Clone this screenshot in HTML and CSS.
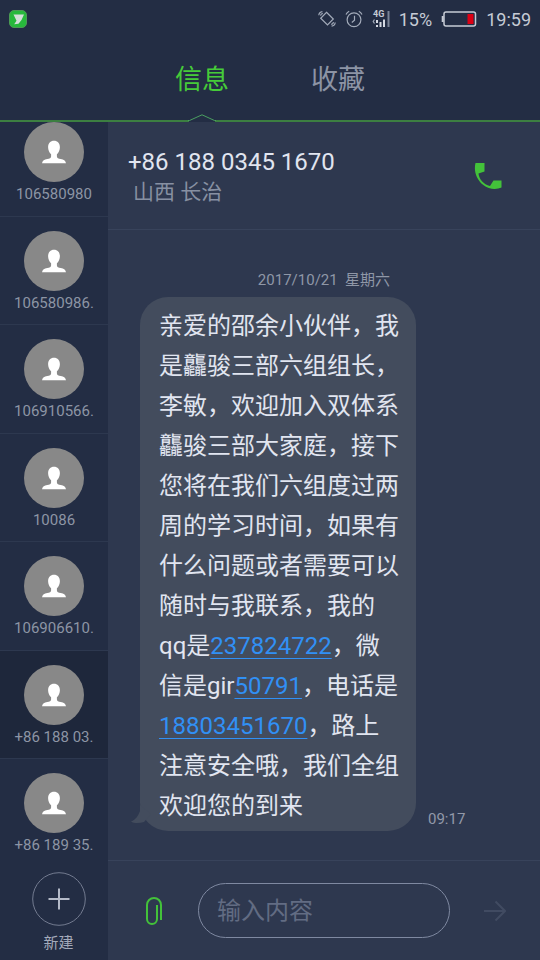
FILE: index.html
```html
<!DOCTYPE html>
<html lang="zh-CN">
<head>
<meta charset="utf-8">
<meta name="viewport" content="width=device-width, initial-scale=1">
<title>信息</title>
<link rel="stylesheet" href="styles.css">
</head>
<body>
<svg class="defs" aria-hidden="true">
  <symbol id="person" viewBox="0 0 24 24">
    <path d="M12 .8c3.600 0 5.900 2.600 5.900 6.400 0 2.900-1.300 5.600-3 7.100v2.100c0 1.500 1.500 2.100 3.900 2.600 2.900.6 4.700 1.500 5.200 4.200H0c.5-2.700 2.300-3.600 5.200-4.200 2.400-.5 3.900-1.100 3.900-2.600v-2.100c-1.700-1.500-3-4.200-3-7.100C6.100 3.400 8.400.8 12 .8z"/>
  </symbol>
</svg>
<div class="app">
  <header class="top">
    <div class="status">
      <svg class="app-icon" viewBox="0 0 18 18" aria-hidden="true">
        <rect x=".5" y=".5" width="17" height="17" rx="4.500" fill="#27b83c" stroke="#4c9a55"/>
        <path d="M4.500 4.500H15l-2.500 5.500-3 3.800-4.300.4 2.300-3.400z" fill="#d3ded9"/>
      </svg>
      <div class="status-icons">
        <svg class="icon-mute" viewBox="0 0 18 18" aria-hidden="true">
          <path d="M8.500 2.300 15.300 9 9.500 15 2.700 8.300z"/>
          <path d="M.8 5.200C1 3.200 2.400 1.800 4.400 1.600M2.500 5.600C2.700 4.300 3.500 3.500 4.800 3.300M17.200 12.500c-.2 2-1.600 3.400-3.600 3.600M15.500 12.100c-.2 1.300-1 2.100-2.300 2.300"/>
        </svg>
        <svg class="icon-alarm" viewBox="0 0 18 18" aria-hidden="true">
          <circle cx="9" cy="9.700" r="6.900"/>
          <path d="M9.500 5.700v4.600l-2.700 2.200M1 4.400C1.700 3 2.800 2 4.200 1.300M13.800 1.300C15.200 2 16.300 3 17 4.400"/>
        </svg>
        <svg class="icon-signal" viewBox="0 0 18 18" aria-hidden="true">
          <text x="1" y="7">4G</text>
          <path class="bars" d="M5 10v3M5 15v2M8.500 12v5M12 9.500V17"/>
          <path class="arrows" d="M2.500 9.500 1.200 11.500l1.300 2"/>
          <path class="faint" d="M16.500 1v16"/>
        </svg>
      </div>
      <span>15%</span>
      <svg class="icon-battery" viewBox="0 0 36 16" aria-hidden="true">
        <rect x="3" y="1" width="31.500" height="14" rx="2" fill="none" stroke="#c6cbd5" stroke-width="1.500"/>
        <path d="M1.700 5v6" stroke="#c6cbd5" stroke-width="2"/>
        <rect x="26.500" y="3" width="6" height="10" fill="#dc0014"/>
      </svg>
      <span>19:59</span>
    </div>
    <nav class="tabs">
      <a class="tab active" href="#messages" aria-current="page">信息</a>
      <a class="tab" href="#favorites">收藏</a>
    </nav>
    <svg class="notch" viewBox="0 0 28 8" aria-hidden="true"><path class="fill" d="M1 6.500 14 .8l13 5.700V8H1z"/><path class="line" d="M0 6.500h1.500L14 .8l12.500 5.700H28"/></svg>
  </header>
  <div class="body">
    <aside class="side">
      <ul class="people">
        <li class="person"><span class="avatar"><svg><use href="#person"/></svg></span><span>106580980</span></li>
        <li class="person"><span class="avatar"><svg><use href="#person"/></svg></span><span>106580986.</span></li>
        <li class="person"><span class="avatar"><svg><use href="#person"/></svg></span><span>106910566.</span></li>
        <li class="person"><span class="avatar"><svg><use href="#person"/></svg></span><span>10086</span></li>
        <li class="person"><span class="avatar"><svg><use href="#person"/></svg></span><span>106906610.</span></li>
        <li class="person selected"><span class="avatar"><svg><use href="#person"/></svg></span><span>+86 188 03.</span></li>
        <li class="person"><span class="avatar"><svg><use href="#person"/></svg></span><span>+86 189 35.</span></li>
      </ul>
      <button class="new" type="button">
        <svg viewBox="0 0 54 54" aria-hidden="true"><circle cx="27" cy="27" r="26.300"/><path d="M16.500 27h21M27 16.500v21"/></svg>
        <span>新建</span>
      </button>
    </aside>
    <main class="chat">
      <div class="contact">
        <div>
          <h1>+86 188 0345 1670</h1>
          <p>山西 长治</p>
        </div>
        <button class="call" type="button" aria-label="拨打电话">
          <svg viewBox="0 0 28 28" aria-hidden="true"><path d="M1.500 1H10.500V9.500L4.500 11.500C5 17 9.500 22.500 16 24L19.500 18.500H27.500V25.500C23 27.500 15.500 28 9 22.800C2.500 17.500-.5 9 1.500 1z"/></svg>
        </button>
      </div>
      <section class="thread">
        <p class="date">2017/10/21&nbsp; 星期六</p>
        <div class="message">
          <div class="bubble">
            <svg class="tail" viewBox="0 0 20 20" aria-hidden="true"><path d="M9 0v6C7 11 5 14.500 0 16.500c3 2 8 2 13 .5L20 9z"/></svg>
            亲爱的邵余小伙伴，我是龘骏三部六组组长，李敏，欢迎加入双体系龘骏三部大家庭，接下您将在我们六组度过两周的学习时间，如果有什么问题或者需要可以随时与我联系，我的<br>qq是<a href="tel:237824722">237824722</a>，微<br>信是gir<a href="tel:50791">50791</a>，电话是<a href="tel:18803451670">18803451670</a>，路上<br>注意安全哦，我们全组欢迎您的到来
          </div>
          <time>09:17</time>
        </div>
      </section>
      <form class="compose">
        <button class="attach" type="button" aria-label="添加附件">
          <svg viewBox="0 0 16 28" aria-hidden="true"><path d="M15 23V8a7 7 0 0 0-14 0v14a5 5 0 0 0 10 0V8"/></svg>
        </button>
        <input type="text" placeholder="输入内容" aria-label="输入内容">
        <button class="send" type="button" aria-label="发送">
          <svg viewBox="0 0 22 22" aria-hidden="true"><path d="M0 11h21M11.500 1.500 21 11l-9.500 9.500"/></svg>
        </button>
      </form>
    </main>
  </div>
</div>
</body>
</html>
```
FILE: styles.css
```css
* { box-sizing: border-box; }
body, h1, p, ul { margin: 0; padding: 0; }
body {
  background: #232d44;
  color: #e1e5f0;
  font-family: Roboto, "Noto Sans CJK SC", sans-serif;
}
button { border: 0; padding: 0; background: none; font: inherit; color: inherit; }
svg { display: block; }
.defs { position: absolute; width: 0; height: 0; }
.app { display: flex; flex-direction: column; min-height: 100vh; }

.top { position: relative; height: 122px; border-bottom: 2px solid #3c7f41; }
.status {
  display: flex;
  align-items: center;
  gap: 9px;
  height: 38px;
  padding: 0 9px;
  font-size: 18px;
  color: #c6cbd5;
}
.app-icon { width: 18px; height: 18px; margin-right: auto; }
.status-icons { display: flex; gap: 9px; }
.status-icons svg { width: 18px; height: 18px; fill: none; stroke: #a3abba; stroke-width: 1.2; }
.icon-signal text { font-size: 9px; font-weight: 700; fill: #c6cbd5; stroke: none; }
.icon-signal .bars { stroke: #d5d9e2; stroke-width: 2; }
.icon-signal .faint { stroke: #7b8497; stroke-width: 2; }
.icon-battery { width: 36px; height: 16px; }

.tabs { display: flex; justify-content: center; gap: 82px; }
.tab {
  line-height: 84px;
  font-size: 27px;
  color: #8c94a5;
  text-decoration: none;
}
.tab.active { color: #46cb39; }
.notch { position: absolute; left: 188px; bottom: -2px; width: 28px; height: 8px; }
.notch .fill { fill: #232d44; }
.notch .line { fill: none; stroke: #4b9f61; stroke-width: 1; }

.body { flex: 1; display: flex; }
.side {
  flex: none;
  display: flex;
  flex-direction: column;
  width: 108px;
  overflow: hidden;
  background: #232d44;
}
.people { flex: 1; display: flex; flex-direction: column; margin-top: -14px; list-style: none; }
.person {
  flex: 1;
  display: flex;
  flex-direction: column;
  align-items: center;
  padding-top: 14px;
  border-bottom: 1px solid #2d384f;
  font-size: 15px;
  line-height: 24px;
  white-space: nowrap;
  color: #8d95a5;
}
.person.selected { background: #1e273b; }
.person:last-child { border-bottom: 0; }
.avatar {
  display: grid;
  place-items: center;
  width: 60px;
  height: 60px;
  border-radius: 50%;
  background: #888;
}
.avatar svg { width: 24px; height: 24px; fill: #fff; }
.new {
  display: flex;
  flex-direction: column;
  align-items: center;
  gap: 5px;
  height: 93px;
  padding: 5px 0 0 9px;
  font-size: 15px;
  line-height: 24px;
  color: #a3aaba;
}
.new svg { width: 54px; height: 54px; fill: none; stroke: #737b90; stroke-width: 1; }
.new path { stroke: #b4bac8; stroke-width: 2; }

.chat { flex: 1; min-width: 0; display: flex; flex-direction: column; background: #2e384f; }
.contact {
  display: flex;
  justify-content: space-between;
  align-items: center;
  height: 108px;
  padding: 0 38px 0 20px;
  border-bottom: 1px solid #38435b;
}
.contact h1 { font-size: 24px; line-height: 32px; font-weight: 400; }
.contact p { padding-left: 5px; font-size: 21px; line-height: 28px; color: #8790a2; }
.call svg { width: 28px; height: 28px; fill: #43c23a; }

.thread { flex: 1; padding: 38px 0 0 32px; }
.date { margin-left: -32px; font-size: 15px; line-height: 24px; text-align: center; color: #8f97a7; }
.message { display: flex; align-items: flex-end; gap: 12px; margin-top: 5px; }
.bubble {
  position: relative;
  width: 276px;
  padding: 9px 17px 5px 19px;
  border-radius: 28px;
  background: #434c5d;
  font-size: 24px;
  line-height: 40px;
}
.bubble a { color: #3190f5; text-decoration-thickness: 1px; text-underline-offset: 4px; }
.tail { position: absolute; left: -9px; bottom: 6px; width: 20px; height: 20px; fill: #434c5d; }
.message time { font-size: 15px; line-height: 24px; color: #9299a9; }

.compose {
  display: flex;
  align-items: center;
  height: 100px;
  padding: 0 34px 0 38px;
  border-top: 1px solid #38435b;
}
.attach svg { width: 16px; height: 28px; fill: none; stroke: #43c23a; stroke-width: 2; }
.compose input {
  flex: 1;
  min-width: 0;
  height: 55px;
  margin: 0 34px 0 36px;
  padding: 0 18px;
  border: 1px solid #7f89a1;
  border-radius: 28px;
  background: none;
  font: inherit;
  font-size: 24px;
  color: #e1e5f0;
}
.compose input::placeholder { color: #626c83; }
.send svg { width: 22px; height: 22px; fill: none; stroke: #414b62; stroke-width: 2; }
```
